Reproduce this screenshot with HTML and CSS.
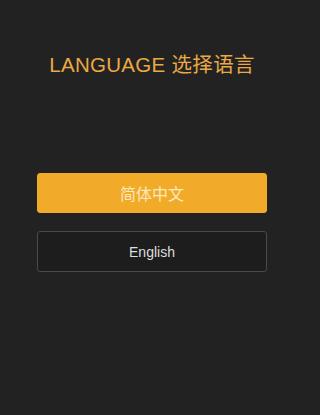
FILE: index.html
```html
<!DOCTYPE html>
<html lang="zh-CN">
<head>
<meta charset="utf-8">
<title>Language</title>
<link rel="stylesheet" href="styles.css">
</head>
<body>
<main class="screen">
  <h1 class="title">LANGUAGE 选择语言</h1>
  <div class="options">
    <button class="option option-primary" type="button">简体中文</button>
    <button class="option option-secondary" type="button">English</button>
  </div>
</main>
</body>
</html>
```
FILE: styles.css
```css
html, body {
  margin: 0;
  padding: 0;
  background: #222223;
}
body {
  width: 304px;
  height: 415px;
  overflow: hidden;
  font-family: "Liberation Sans", "Noto Sans CJK SC", sans-serif;
}
.screen {
  display: flex;
  flex-direction: column;
  padding-top: 53px;
}
.title {
  margin: 0;
  font-size: 20.5px;
  line-height: 24px;
  font-weight: normal;
  text-align: center;
  color: #eaa943;
  letter-spacing: 0.3px;
}
.options {
  display: flex;
  flex-direction: column;
  gap: 18px;
  margin: 96px 37px 0;
}
.option {
  display: block;
  width: 100%;
  margin: 0;
  font-family: "Liberation Sans", "Noto Sans CJK SC", sans-serif;
  border-radius: 3px;
  cursor: pointer;
}
.option-primary {
  height: 40px;
  background: #f2ab29;
  border: 1px solid #f2ab29;
  color: #fbe8bd;
  font-size: 16px;
}
.option-secondary {
  height: 41px;
  background: #1d1d1e;
  border: 1px solid #4a4a4c;
  color: #dedede;
  font-size: 14px;
}
```
